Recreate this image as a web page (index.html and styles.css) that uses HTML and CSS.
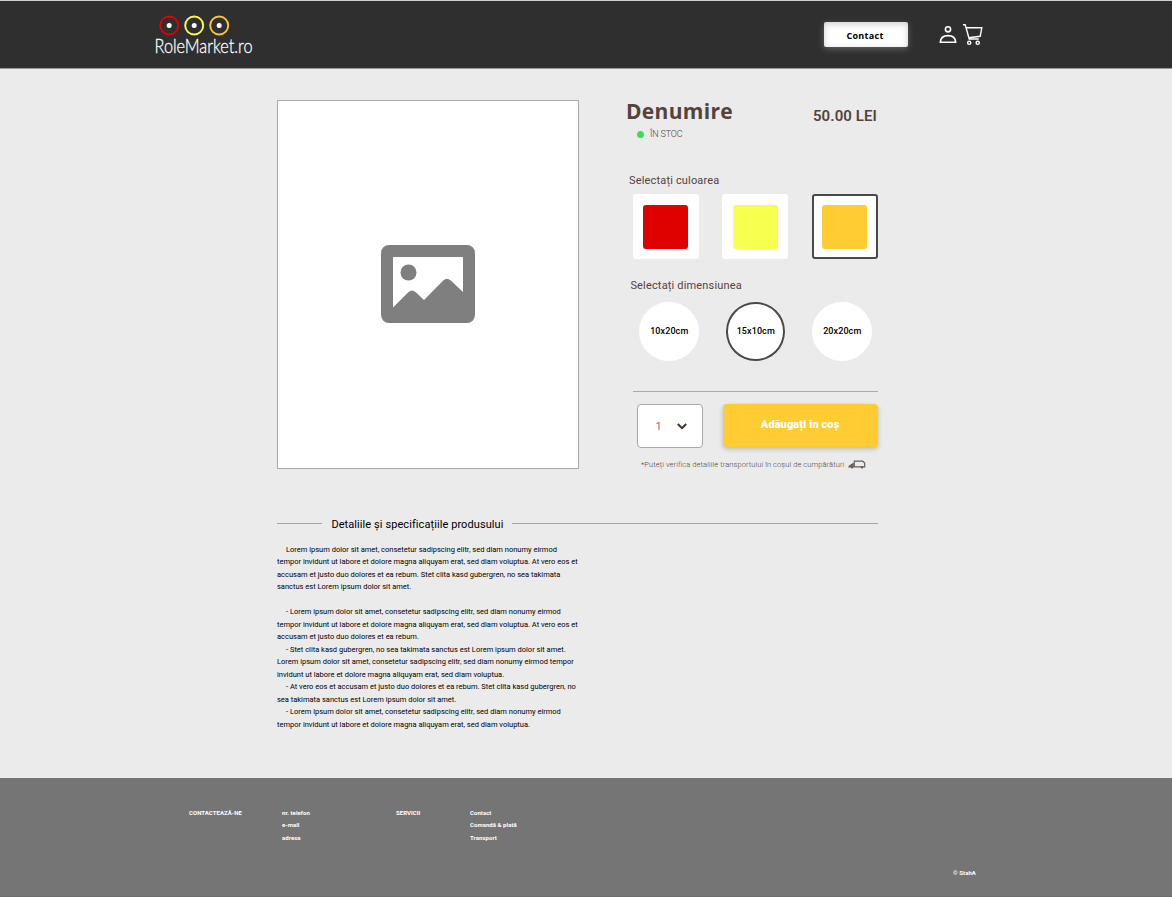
FILE: index.html
```html
<!DOCTYPE html>
<html lang="ro">
<head>
<meta charset="utf-8">
<title>RoleMarket.ro</title>
<link rel="stylesheet" href="styles.css">
</head>
<body>
<header class="header">
  <svg class="logo" width="98" height="42" viewBox="0 0 98 42">
    <g fill="none" stroke-width="1.9">
      <circle cx="14.200" cy="10.500" r="9" stroke="#e00000"/>
      <circle cx="39.200" cy="10.500" r="9" stroke="#f7ff4f"/>
      <circle cx="64.200" cy="10.500" r="9" stroke="#ffc72f"/>
    </g>
    <g fill="#fff"><circle cx="14.200" cy="10.500" r="2.500"/><circle cx="39.200" cy="10.500" r="2.500"/><circle cx="64.200" cy="10.500" r="2.500"/></g>
    <text class="logo-text" x="-.5" y="38.300" textLength="98" lengthAdjust="spacingAndGlyphs">RoleMarket.ro</text>
  </svg>
  <a class="contact">Contact</a>
  <svg class="user" width="18" height="19" viewBox="0 0 18 19" fill="none" stroke="#fff" stroke-width="1.6">
    <circle cx="9" cy="4.300" r="2.600"/>
    <path d="M1.300 17.200C1.600 13 4.700 10.600 9 10.600s7.400 2.400 7.700 6.600z"/>
  </svg>
  <svg class="cart" width="22" height="22" viewBox="0 0 22 22" fill="none" stroke="#fff" stroke-width="1.400">
    <path d="M1 .8h2.200l4 14.200h9.600M4.200 3.800h15.600l-1.600 8.500-11.500 1.500"/>
    <circle cx="7.200" cy="18.800" r="1.600"/><circle cx="15.700" cy="18.800" r="1.600"/>
  </svg>
</header>

<main class="main">
  <section class="product">
    <div class="photo">
      <svg width="94" height="78" viewBox="0 0 94 78">
        <path fill="#7f7f7f" fill-rule="evenodd" d="M8 0h78a8 8 0 0 1 8 8v62a8 8 0 0 1-8 8H8a8 8 0 0 1-8-8V8a8 8 0 0 1 8-8zM12 12v50.500L27.500 47q3.500-3 7 0L43 55 62.500 35.300q3.500-3 7 0L82 47V12z"/>
        <circle cx="27.500" cy="27.500" r="8" fill="#7f7f7f"/>
      </svg>
    </div>
    <div class="info">
      <div class="heading"><h1 class="title">Denumire</h1><span class="price">50.00 LEI</span></div>
      <div class="stock"><i class="dot"></i><span class="stock-text">ÎN STOC</span></div>
      <div class="label">Selectați culoarea</div>
      <div class="colors">
        <div class="color"><i class="swatch red"></i></div>
        <div class="color"><i class="swatch yellow"></i></div>
        <div class="color selected"><i class="swatch amber"></i></div>
      </div>
      <div class="label label-size">Selectați dimensiunea</div>
      <div class="sizes">
        <div class="size">10x20cm</div>
        <div class="size selected">15x10cm</div>
        <div class="size">20x20cm</div>
      </div>
      <div class="buy">
        <div class="quantity"><span>1</span>
          <svg width="10" height="7" viewBox="0 0 10 7" fill="none" stroke="#42352f" stroke-width="2"><path d="M.8 1 5 5.200 9.200 1"/></svg>
        </div>
        <button class="add">Adăugați în coș</button>
      </div>
      <div class="shipping"><span class="shipping-text">*Puteți verifica detaliile transportului în coșul de cumpărături</span>
        <svg width="18" height="9" viewBox="0 0 18 9" fill="none" stroke="#68615e" stroke-width="1.200">
          <path d="M6.300 6.800V1.200h8.400L16.700 3v3.800z"/><path fill="#68615e" stroke="none" d="M0 7.600 1 5.500 5.800 2.500v5.100z"/><circle cx="4" cy="7.200" r=".7"/><circle cx="14" cy="7.200" r=".7"/>
        </svg>
      </div>
    </div>
  </section>

  <section class="details">
    <h2 class="details-title"><span class="details-text">Detaliile și specificațiile produsului</span></h2>
    <div class="copy">
      <p class="indent">Lorem ipsum dolor sit amet, consetetur sadipscing elitr, sed diam nonumy eirmod<br>tempor invidunt ut labore et dolore magna aliquyam erat, sed diam voluptua. At vero eos et<br>accusam et justo duo dolores et ea rebum. Stet clita kasd gubergren, no sea takimata<br>sanctus est Lorem ipsum dolor sit amet.</p>
      <p class="indent spaced">- Lorem ipsum dolor sit amet, consetetur sadipscing elitr, sed diam nonumy eirmod<br>tempor invidunt ut labore et dolore magna aliquyam erat, sed diam voluptua. At vero eos et<br>accusam et justo duo dolores et ea rebum.</p>
      <p class="indent">- Stet clita kasd gubergren, no sea takimata sanctus est Lorem ipsum dolor sit amet.<br>Lorem ipsum dolor sit amet, consetetur sadipscing elitr, sed diam nonumy eirmod tempor<br>invidunt ut labore et dolore magna aliquyam erat, sed diam voluptua.</p>
      <p class="indent">- At vero eos et accusam et justo duo dolores et ea rebum. Stet clita kasd gubergren, no<br>sea takimata sanctus est Lorem ipsum dolor sit amet.</p>
      <p class="indent">- Lorem ipsum dolor sit amet, consetetur sadipscing elitr, sed diam nonumy eirmod<br>tempor invidunt ut labore et dolore magna aliquyam erat, sed diam voluptua.</p>
    </div>
  </section>
</main>

<footer class="footer">
  <div class="columns">
    <div>CONTACTEAZĂ-NE</div>
    <div>nr. telefon<br>e-mail<br>adresa</div>
    <div>SERVICII</div>
    <div>Contact<br>Comandă &amp; plată<br>Transport</div>
  </div>
  <div class="copyright">© StahA</div>
</footer>
</body>
</html>
```
FILE: styles.css
```css
* { box-sizing: border-box; }
body { margin: 0; width: 1172px; height: 897px; overflow: hidden; display: flex; flex-direction: column; background: #ebebeb; font-family: Roboto, sans-serif; color: #000; white-space: nowrap; }
h1, h2, p { margin: 0; font-weight: 400; }
svg { flex: none; display: block; overflow: visible; }

.header { flex: none; height: 69px; display: flex; align-items: flex-start; padding: 14px 0 0 155px; background: #2f2f2f; border-top: 1px solid #ccd2d0; border-bottom: 1px solid #999; }
.logo-text { font: 300 19.5px Lato, sans-serif; fill: #fff; stroke: #fff; stroke-width: .3px; }
.contact { width: 84px; height: 25px; margin: 7px 0 0 571px; border-radius: 2px; background: #fff; box-shadow: 0 2px 6px rgba(255,255,255,.25), inset 0 2px 6px rgba(0,0,0,.2); font: 700 9px/27px "Open Sans", sans-serif; letter-spacing: .3px; text-align: center; padding-right: 2px; }
.user { margin: 10px 0 0 31px; }
.cart { margin: 9px 0 0 5px; }

.main { flex: none; height: 709px; padding: 31px 0 0 277px; }
.product { display: flex; height: 369px; gap: 46px; }
.photo { flex: none; width: 302px; height: 369px; display: flex; align-items: center; justify-content: center; padding-bottom: 2px; background: #fff; border: 1px solid #aaa; }
.info { flex: none; width: 252px; color: #54433c; }
.heading { display: flex; justify-content: space-between; height: 28px; padding-left: 1px; }
.title { font: 700 21px/22px "Open Sans", sans-serif; letter-spacing: .3px; }
.price { font-weight: 600; font-size: 15px; line-height: 33px; letter-spacing: .1px; }
.stock { display: flex; align-items: center; height: 12px; padding-left: 12px; gap: 6px; font-size: 9px; font-weight: 300; letter-spacing: -.15px; }
.dot { width: 7px; height: 7px; border-radius: 50%; background: #41d95d; }
.label { height: 14px; margin: 34px 0 0 4px; font-size: 11px; line-height: 14px; letter-spacing: .17px; }
.colors { display: flex; justify-content: space-between; margin: 6px 0 0 7.6px; width: 245px; }
.color { width: 66px; height: 65px; display: flex; align-items: center; justify-content: center; border-radius: 3px; background: #fff; }
.color.selected, .size.selected { border: 2px solid #494949; }
.swatch { width: 45px; height: 44px; border-radius: 3px; }
.red { background: #df0000; }
.yellow { background: #f7ff4f; }
.amber { background: #ffcd31; }
.label-size { margin: 20px 0 0 5.4px; }
.sizes { display: flex; gap: 27px; height: 89.5px; margin: 9px 0 0 8px; padding-left: 6px; border-bottom: 1px solid #aaa; width: 245px; }
.size { width: 59.5px; height: 59px; border-radius: 50%; background: #fff; display: flex; align-items: center; justify-content: center; padding: 0 0 1px 1px; color: #000; font-size: 9px; font-weight: 500; letter-spacing: .1px; }
.buy { display: flex; gap: 20px; margin: 12.5px 0 0 11.6px; }
.quantity { flex: none; width: 66px; height: 44px; border: 1px solid #aaa; border-radius: 4px; background: #fff; display: flex; align-items: center; padding-left: 18px; gap: 15px; font-size: 11px; color: #857b77; }
.add { flex: none; width: 155px; height: 43px; border: 0; border-radius: 4px; background: #ffcd31; box-shadow: 0 2px 5px rgba(0,0,0,.22); color: #fff; font: 900 11px Roboto, sans-serif; letter-spacing: .1px; padding: 0 0 3px; }
.shipping { display: flex; align-items: center; gap: 4px; height: 12px; margin: 10px 0 0 16px; font-size: 7.5px; font-weight: 300; letter-spacing: .095px; }

.details-title { display: flex; align-items: center; width: 601px; height: 16px; margin-top: 46px; font-size: 11px; letter-spacing: .08px; gap: 9px; line-height: 18px; }
.details-title::before, .details-title::after { content: ""; height: 1px; background: #a5a5a5; width: 45.4px; }
.details-title::after { flex: 1; }
.details-text { padding-top: 3px; }
.copy { margin-top: 12.5px; font-size: 7.5px; line-height: 12.5px; }
.indent { text-indent: 9px; }
.spaced { margin-top: 12.5px; }

.footer { flex: 1; padding: 29px 0 0 189px; background: #757575; border-bottom: 1px solid #6c6c6c; color: #fff; font-size: 6px; font-weight: 700; line-height: 12.4px; letter-spacing: .05px; }
.columns { display: grid; grid-template-columns: 93px 114px 74px 100px; height: 60px; }
.copyright { margin-left: 764px; }
```
